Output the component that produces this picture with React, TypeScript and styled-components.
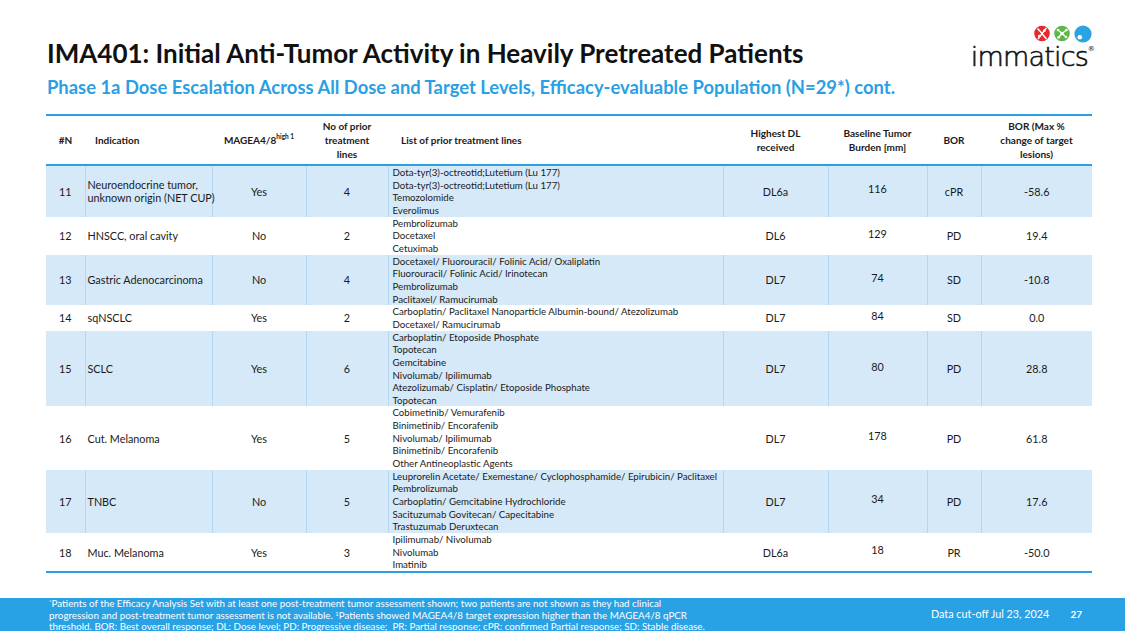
import React from "react";
import styled, { createGlobalStyle } from "styled-components";

const GlobalStyle = createGlobalStyle`
  html, body {
    margin: 0;
    padding: 0;
    background: #ffffff;
  }
  body {
    font-family: Lato, "Open Sans", sans-serif;
    color: #1a1a1a;
  }
`;

type Row = {
  n: number;
  indication: string;
  magea: string;
  lines: number;
  treatments: string[];
  dl: string;
  burden: number;
  bor: string;
  change: string;
  shaded?: boolean;
};

const rows: Row[] = [
  {
    n: 11,
    indication: "Neuroendocrine tumor,\nunknown origin (NET CUP)",
    magea: "Yes",
    lines: 4,
    treatments: [
      "Dota-tyr(3)-octreotid;Lutetium (Lu 177)",
      "Dota-tyr(3)-octreotid;Lutetium (Lu 177)",
      "Temozolomide",
      "Everolimus",
    ],
    dl: "DL6a",
    burden: 116,
    bor: "cPR",
    change: "-58.6",
    shaded: true,
  },
  {
    n: 12,
    indication: "HNSCC, oral cavity",
    magea: "No",
    lines: 2,
    treatments: ["Pembrolizumab", "Docetaxel", "Cetuximab"],
    dl: "DL6",
    burden: 129,
    bor: "PD",
    change: "19.4",
  },
  {
    n: 13,
    indication: "Gastric Adenocarcinoma",
    magea: "No",
    lines: 4,
    treatments: [
      "Docetaxel/ Fluorouracil/ Folinic Acid/ Oxaliplatin",
      "Fluorouracil/ Folinic Acid/ Irinotecan",
      "Pembrolizumab",
      "Paclitaxel/ Ramucirumab",
    ],
    dl: "DL7",
    burden: 74,
    bor: "SD",
    change: "-10.8",
    shaded: true,
  },
  {
    n: 14,
    indication: "sqNSCLC",
    magea: "Yes",
    lines: 2,
    treatments: [
      "Carboplatin/ Paclitaxel Nanoparticle Albumin-bound/ Atezolizumab",
      "Docetaxel/ Ramucirumab",
    ],
    dl: "DL7",
    burden: 84,
    bor: "SD",
    change: "0.0",
  },
  {
    n: 15,
    indication: "SCLC",
    magea: "Yes",
    lines: 6,
    treatments: [
      "Carboplatin/ Etoposide Phosphate",
      "Topotecan",
      "Gemcitabine",
      "Nivolumab/ Ipilimumab",
      "Atezolizumab/ Cisplatin/ Etoposide Phosphate",
      "Topotecan",
    ],
    dl: "DL7",
    burden: 80,
    bor: "PD",
    change: "28.8",
    shaded: true,
  },
  {
    n: 16,
    indication: "Cut. Melanoma",
    magea: "Yes",
    lines: 5,
    treatments: [
      "Cobimetinib/ Vemurafenib",
      "Binimetinib/ Encorafenib",
      "Nivolumab/ Ipilimumab",
      "Binimetinib/ Encorafenib",
      "Other Antineoplastic Agents",
    ],
    dl: "DL7",
    burden: 178,
    bor: "PD",
    change: "61.8",
  },
  {
    n: 17,
    indication: "TNBC",
    magea: "No",
    lines: 5,
    treatments: [
      "Leuprorelin Acetate/ Exemestane/ Cyclophosphamide/ Epirubicin/ Paclitaxel",
      "Pembrolizumab",
      "Carboplatin/ Gemcitabine Hydrochloride",
      "Sacituzumab Govitecan/ Capecitabine",
      "Trastuzumab Deruxtecan",
    ],
    dl: "DL7",
    burden: 34,
    bor: "PD",
    change: "17.6",
    shaded: true,
  },
  {
    n: 18,
    indication: "Muc. Melanoma",
    magea: "Yes",
    lines: 3,
    treatments: ["Ipilimumab/ Nivolumab", "Nivolumab", "Imatinib"],
    dl: "DL6a",
    burden: 18,
    bor: "PR",
    change: "-50.0",
  },
];

const colWidths = [39, 127, 94, 82, 335, 105, 99, 54, 111];

export default function App() {
  return (
    <>
      <GlobalStyle />
      <Page>
        <Header>
          <Titles>
            <Title>IMA401: Initial Anti-Tumor Activity in Heavily Pretreated Patients</Title>
            <Subtitle>
              Phase 1a Dose Escalation Across All Dose and Target Levels, Efficacy-evaluable Population (N=29*) cont.
            </Subtitle>
          </Titles>
          <Logo />
        </Header>

        <TableWrap>
          <Table>
            <colgroup>
              {colWidths.map((w, i) => (
                <col key={i} style={{ width: w }} />
              ))}
            </colgroup>
            <thead>
              <tr>
                <Th>#N</Th>
                <Th $align="left" $pad={10}>Indication</Th>
                <Th>
                  MAGEA4/8<Sup>high 1</Sup>
                </Th>
                <Th>
                  No of prior
                  <br />
                  treatment
                  <br />
                  lines
                </Th>
                <Th $align="left" $pad={13}>List of prior treatment lines</Th>
                <Th>
                  Highest DL
                  <br />
                  received
                </Th>
                <Th>
                  Baseline Tumor
                  <br />
                  Burden [mm]
                </Th>
                <Th>BOR</Th>
                <Th>
                  BOR (Max %
                  <br />
                  change of target
                  <br />
                  lesions)
                </Th>
              </tr>
            </thead>
            <tbody>
              {rows.map((r) => (
                <Tr key={r.n} $shaded={r.shaded}>
                  <Td $shaded={r.shaded} $first>{r.n}</Td>
                  <IndicationCell $shaded={r.shaded}>{r.indication}</IndicationCell>
                  <Td $shaded={r.shaded}>{r.magea}</Td>
                  <Td $shaded={r.shaded}>{r.lines}</Td>
                  <ListCell $shaded={r.shaded}>
                    {r.treatments.map((t, i) => (
                      <TreatmentLine key={i}>{t}</TreatmentLine>
                    ))}
                  </ListCell>
                  <Td $shaded={r.shaded}>{r.dl}</Td>
                  <Td $shaded={r.shaded} $raise>{r.burden}</Td>
                  <Td $shaded={r.shaded}>{r.bor}</Td>
                  <Td $shaded={r.shaded}>{r.change}</Td>
                </Tr>
              ))}
            </tbody>
          </Table>
        </TableWrap>

        <Footer>
          <FootNote>
            <sup>*</sup>Patients of the Efficacy Analysis Set with at least one post-treatment tumor assessment shown; two patients are not shown as they had clinical
            <br />
            progression and post-treatment tumor assessment is not available. <sup>1</sup>Patients showed MAGEA4/8 target expression higher than the MAGEA4/8 qPCR
            <br />
            threshold. BOR: Best overall response; DL: Dose level; PD: Progressive disease;&nbsp; PR: Partial response; cPR: confirmed Partial response; SD: Stable disease.
          </FootNote>
          <FooterRight>
            <CutOff>Data cut-off Jul 23, 2024</CutOff>
            <PageNo>27</PageNo>
          </FooterRight>
        </Footer>
      </Page>
    </>
  );
}

const Logo: React.FC = () => (
  <LogoBox>
    <LogoDots width="58" height="18" viewBox="0 0 58 18">
      <circle cx="8" cy="8.5" r="7.8" fill="#e52a2f" />
      <path d="M3.5 3.5 C7 7 9 10 12.5 14" stroke="#fff" strokeWidth="1.5" fill="none" />
      <path d="M12.5 3 C9 6.5 7 10.5 4 14" stroke="#fff" strokeWidth="1.5" fill="none" />
      <circle cx="5.3" cy="11" r="1.3" fill="#fff" />
      <circle cx="10.5" cy="5.6" r="1.3" fill="#fff" />
      <circle cx="28" cy="8.5" r="7.8" fill="#5cb947" />
      <path d="M24 5 L28 8.5 L32.5 5 M28 8.5 L24.5 12.5 M28 8.5 L32 12" stroke="#fff" strokeWidth="1.3" fill="none" />
      <circle cx="28" cy="8.5" r="1.7" fill="#fff" />
      <circle cx="24" cy="5" r="1.3" fill="#fff" />
      <circle cx="32.5" cy="5" r="1.3" fill="#fff" />
      <circle cx="24.5" cy="12.5" r="1.3" fill="#fff" />
      <circle cx="32" cy="12" r="1.3" fill="#fff" />
      <circle cx="49" cy="9" r="8.6" fill="#2aa3e3" />
      <circle cx="45.8" cy="12.3" r="2.3" fill="#fff" />
    </LogoDots>
    <LogoWord>
      immatics<Reg>®</Reg>
    </LogoWord>
  </LogoBox>
);

const Page = styled.div`
  width: 1125px;
  height: 631px;
  overflow: hidden;
  display: flex;
  flex-direction: column;
  background: #fff;
`;

const Header = styled.header`
  display: flex;
  justify-content: space-between;
  align-items: flex-start;
  padding: 37px 33px 0 47px;
`;

const Titles = styled.div`
  display: flex;
  flex-direction: column;
  gap: 6px;
`;

const Title = styled.h1`
  margin: 0;
  font-family: Lato, "Open Sans", sans-serif;
  font-weight: 700;
  font-size: 26px;
  line-height: 32px;
  color: #111;
  white-space: nowrap;
`;

const Subtitle = styled.h2`
  margin: 0;
  font-family: Lato, "Open Sans", sans-serif;
  font-weight: 700;
  font-size: 18.4px;
  line-height: 24px;
  color: #2b9fe3;
  white-space: nowrap;
`;

const LogoBox = styled.div`
  display: flex;
  flex-direction: column;
  align-items: flex-end;
  margin-top: -12px;
`;

const LogoDots = styled.svg`
  display: block;
`;

const LogoWord = styled.div`
  position: relative;
  font-family: "DejaVu Sans", sans-serif;
  font-weight: 200;
  font-size: 27px;
  line-height: 22px;
  letter-spacing: -0.8px;
  color: #111;
  -webkit-text-stroke: 0.6px #111;
  padding: 3px 4px 0 0;
`;

const Reg = styled.span`
  position: absolute;
  right: -2px;
  top: 3px;
  font-size: 7px;
  line-height: 7px;
  font-weight: 400;
  -webkit-text-stroke: 0;
`;

const TableWrap = styled.div`
  padding: 0 0 0 46px;
  margin-top: 15px;
`;

const Table = styled.table`
  width: 1046px;
  table-layout: fixed;
  border-collapse: collapse;
  border-top: 2px solid #2b9fe3;
  border-bottom: 2px solid #2b9fe3;
  font-family: Lato, "Open Sans", sans-serif;
`;

const Th = styled.th<{ $align?: string; $pad?: number }>`
  font-size: 10px;
  font-weight: 700;
  line-height: 14px;
  height: 48px;
  padding: 0 0 0 ${(p) => p.$pad ?? 0}px;
  text-align: ${(p) => p.$align ?? "center"};
  vertical-align: middle;
  color: #1a1a1a;
  border-bottom: 2px solid #2b9fe3;
`;

const Sup = styled.sup`
  font-size: 6.5px;
  vertical-align: 5px;
  line-height: 0;
`;

const Tr = styled.tr<{ $shaded?: boolean }>`
  background: ${(p) => (p.$shaded ? "#d5e9f9" : "#fff")};
`;

const cellLine = (shaded?: boolean) => `1px solid ${shaded ? "#b5d7f1" : "transparent"}`;

const Td = styled.td<{ $shaded?: boolean; $first?: boolean; $raise?: boolean }>`
  font-size: 10.8px;
  line-height: 13px;
  padding: 0 0 ${(p) => (p.$raise ? 5 : 0)}px 0;
  text-align: center;
  vertical-align: middle;
  border-left: ${(p) => (p.$first ? "none" : cellLine(p.$shaded))};
  color: #1a1a1a;
`;

const IndicationCell = styled.td<{ $shaded?: boolean }>`
  font-size: 10.8px;
  line-height: 13px;
  padding: 0 0 0 2px;
  text-align: left;
  vertical-align: middle;
  white-space: pre;
  border-left: ${(p) => cellLine(p.$shaded)};
  color: #1a1a1a;
`;

const ListCell = styled.td<{ $shaded?: boolean }>`
  padding: 0 0 0 4px;
  vertical-align: middle;
  border-left: ${(p) => cellLine(p.$shaded)};
`;

const TreatmentLine = styled.div`
  font-size: 9.7px;
  line-height: 12.65px;
  white-space: nowrap;
  color: #1a1a1a;
`;

const Footer = styled.footer`
  margin-top: auto;
  height: 33px;
  background: #29a1e5;
  display: flex;
  justify-content: space-between;
  overflow: hidden;
  padding: 0 43px 0 49px;
  color: #fff;
  font-family: Lato, "Open Sans", sans-serif;
`;

const FootNote = styled.div`
  font-size: 9.8px;
  line-height: 11.5px;
  white-space: nowrap;

  sup {
    font-size: 6px;
    vertical-align: 3px;
    line-height: 0;
  }
`;

const FooterRight = styled.div`
  display: flex;
  align-items: center;
  gap: 21px;
  padding-bottom: 2px;
`;

const CutOff = styled.span`
  font-size: 10.8px;
`;

const PageNo = styled.span`
  font-size: 10px;
  font-weight: 700;
`;
